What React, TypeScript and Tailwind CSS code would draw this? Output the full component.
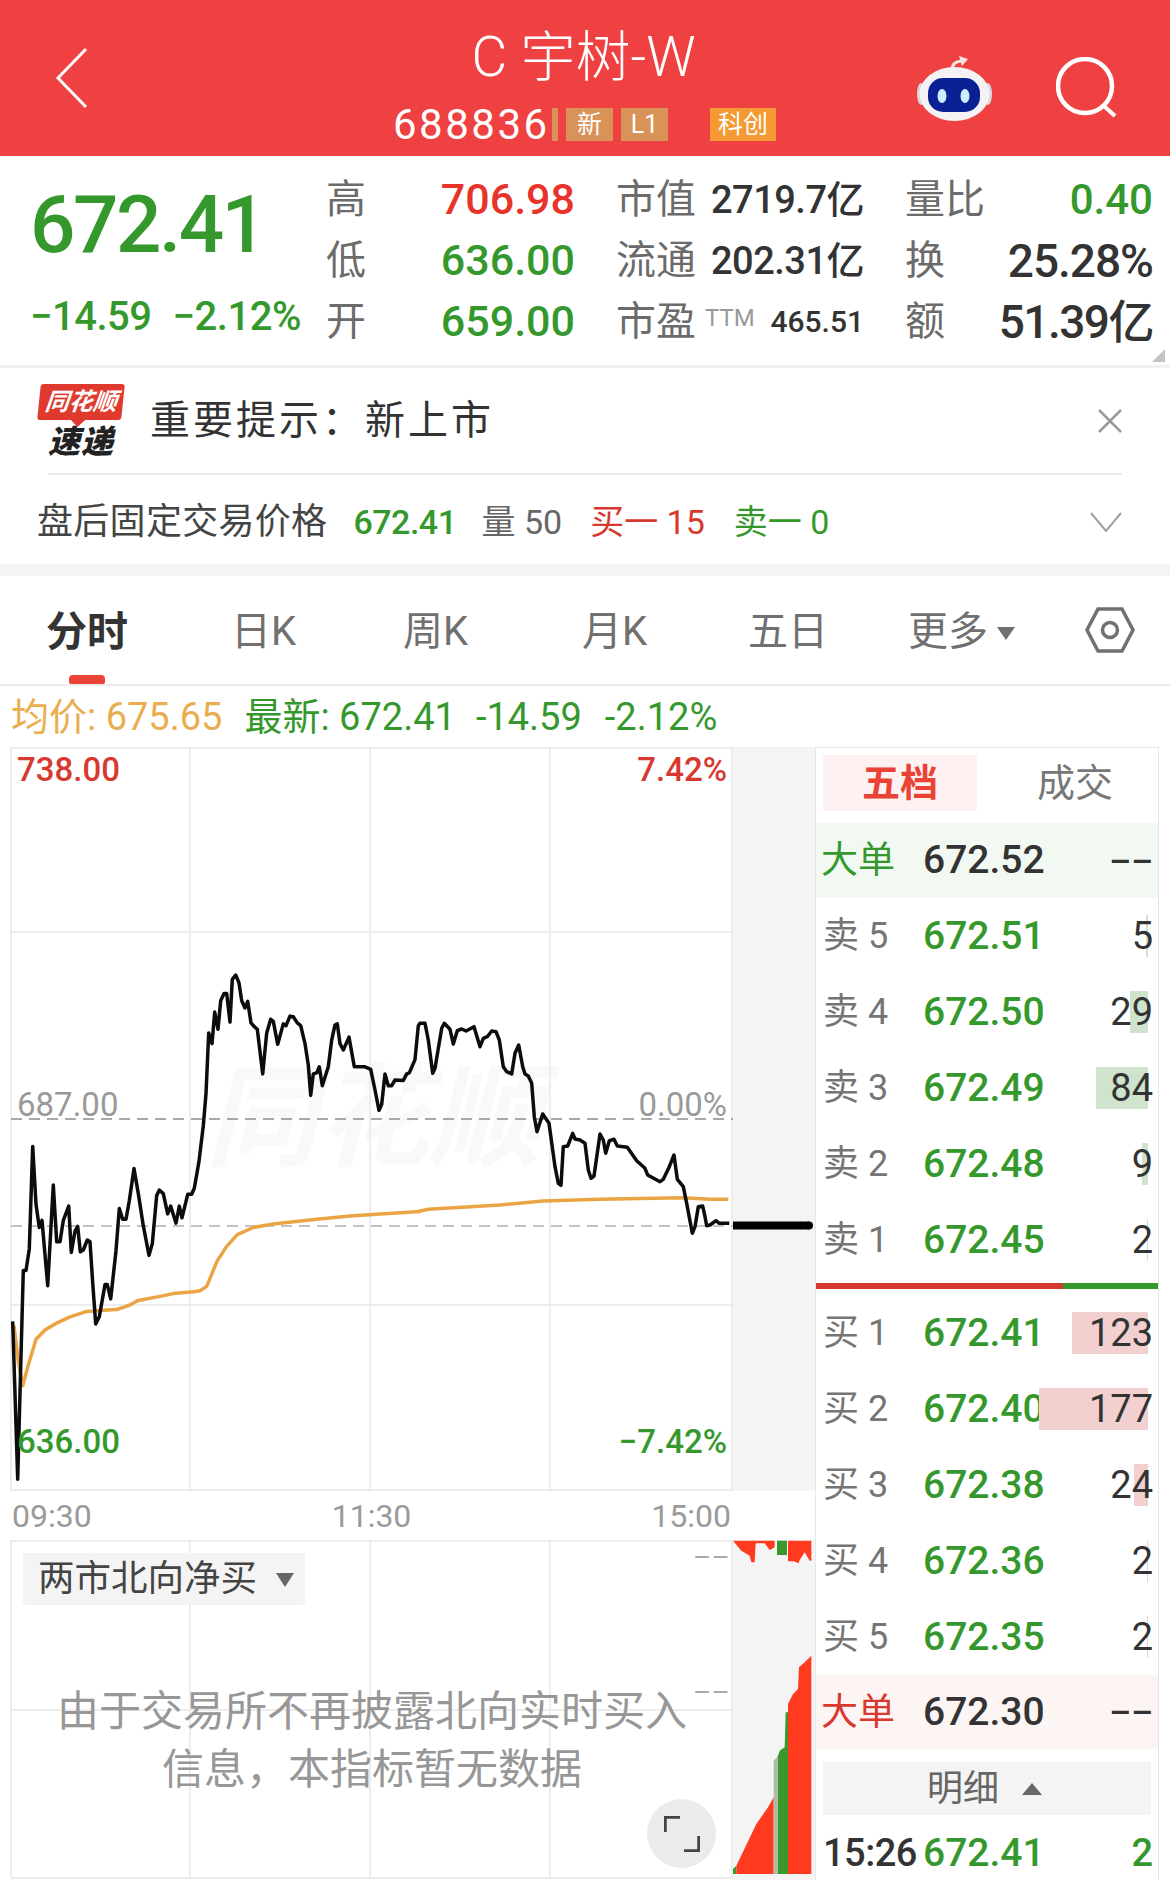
// chart points read off the reference, in crop coordinates
const blackA = [[38,1068],[53,1510],[70,925],[78,925],[88,865],[98,578],[108,740],[118,805],[126,785],[143,968],[160,686],[170,845],[180,845],[190,785],[206,745],[214,875],[225,815],[233,802],[241,873],[250,868],[262,840],[270,845],[278,960],[287,1075],[298,1055],[315,965],[322,965],[332,1005],[348,870],[358,752],[368,782],[378,782],[388,730],[402,640],[415,710],[430,800],[447,883],[457,850],[470,715],[478,700],[490,710],[503,767],[512,745],[528,793],[538,745],[546,778],[563,712],[575,712],[583,695],[597,620],[610,520],[618,430],[626,260],[636,290],[644,202],[654,250],[662,170],[672,150],[680,150],[690,230],[697,110],[707,98],[717,120],[725,170],[735,190],[743,172],[753,232],[762,242],[772,250],[788,375],[800,260],[812,222],[820,228],[833,292],[850,235],[858,240],[870,213],[880,215],[892,232],[902,240],[915,290],[925,350],[932,435],[940,375],[950,372],[958,355],[967,408],[985,355],[995,280],[1005,238],[1012,235],[1020,290],[1030,308],[1047,272],[1063,355],[1095,355],[1112,362],[1125,420],[1137,477],[1145,460],[1155,375],[1165,408],[1175,408],[1185,392],[1210,393],[1220,375],[1228,372],[1245,335],[1255,240],[1260,233]];
const blackB = [[75,250],[85,300],[98,400],[105,385],[125,265],[133,250],[150,268],[160,312],[172,272],[185,267],[198,273],[222,260],[240,320],[250,295],[262,290],[275,273],[288,275],[298,300],[310,380],[320,395],[335,402],[345,340],[356,315],[368,380],[375,402],[385,408],[395,430],[403,530],[411,575],[428,522],[447,550],[465,680],[475,730],[483,736],[490,620],[503,618],[518,580],[525,597],[540,600],[555,610],[565,690],[573,715],[582,708],[600,582],[610,600],[617,640],[628,602],[642,598],[652,618],[682,622],[710,662],[735,685],[743,705],[780,725],[790,718],[808,680],[822,645],[832,718],[850,740],[860,790],[877,880],[885,860],[895,800],[908,798],[915,830],[920,857],[930,855],[948,842],[958,850],[988,850]];
const orangeA = [[42,1080],[55,1180],[68,1248],[85,1190],[108,1118],[135,1092],[165,1075],[210,1055],[260,1040],[300,1037],[350,1035],[390,1022],[412,1010],[480,998],[520,990],[580,985],[600,982],[620,970],[652,898],[680,858],[712,825],[760,805],[820,795],[950,782],[1050,773],[1130,768],[1260,760]];
const orangeB = [[50,815],[85,808],[300,795],[430,783],[600,778],[850,773],[930,778],[985,778]];

const TOP = 747;
const fromA = (p: number[]) => `${(p[0] / 3).toFixed(1)},${(940 + p[1] / 2.8 - TOP).toFixed(1)}`;
const fromB = (p: number[]) => `${(400 + p[0] / 3).toFixed(1)},${(940 + p[1] / 3 - TOP).toFixed(1)}`;
const blackLine = [...blackA.map(fromA), ...blackB.map(fromB)].join(' ');
const orangeLine = [...orangeA.map(fromA), ...orangeB.map(fromB)].join(' ');

// side strip shapes, crop coordinates at 3x
const strip = (pts: number[][]) =>
  pts.map(p => `${(p[0] - 100) / 3},${(p[1] - 58) / 3}`).join(' ');

const sells = [
  { n: '5', price: '672.51', vol: '5', bar: 'w-[2px]' },
  { n: '4', price: '672.50', vol: '29', bar: 'w-[18px]' },
  { n: '3', price: '672.49', vol: '84', bar: 'w-[52px]' },
  { n: '2', price: '672.48', vol: '9', bar: 'w-[6px]' },
  { n: '1', price: '672.45', vol: '2', bar: 'w-[1px]' }
];
const buys = [
  { n: '1', price: '672.41', vol: '123', bar: 'w-[76px]' },
  { n: '2', price: '672.40', vol: '177', bar: 'w-[109px]' },
  { n: '3', price: '672.38', vol: '24', bar: 'w-[14px]' },
  { n: '4', price: '672.36', vol: '2', bar: 'w-[1px]' },
  { n: '5', price: '672.35', vol: '2', bar: 'w-[1px]' }
];

const Stat = ({ label, value, valueClass }: { label: string; value: string; valueClass: string }) => (
  <div className="flex h-[61px] items-center justify-between">
    <span className="text-[40px] leading-none text-[#6b6b6b]">{label}</span>
    <span className={valueClass}>{value}</span>
  </div>
);

const Level = ({ side, row, barClass }: { side: string; row: (typeof sells)[number]; barClass: string }) => (
  <div className="flex h-[76px] items-center pl-[7px]">
    <div className="flex w-[100px] items-center gap-[9px] text-[36px] leading-none text-[#757575]">
      <span>{side}</span>
      <span>{row.n}</span>
    </div>
    <span className="text-[39px] leading-none font-medium text-[#35982c]">{row.price}</span>
    <div className="relative ml-auto flex h-[42px] items-center pr-[5px] text-[38px] leading-none text-[#333]">
      <div className={`absolute top-0 right-[10px] h-[42px] ${row.bar} ${barClass}`} />
      <span className="relative">{row.vol}</span>
    </div>
  </div>
);

const tabs = [
  { label: '日K', w: 'w-[172px]' },
  { label: '周K', w: 'w-[179px]' },
  { label: '月K', w: 'w-[166px]' },
  { label: '五日', w: 'w-[160px]' }
];

export default function App() {
  return (
    <div className="h-[1880px] w-[1170px] overflow-hidden bg-white font-['Roboto','Noto_Sans_CJK_SC',sans-serif]">
      {/* header */}
      <div className="flex h-[156px] bg-[#ef4141] text-white">
        <div className="flex w-[393px] items-center pl-[55px]">
          <svg width="34" height="62" viewBox="0 0 34 62" fill="none" stroke="white" strokeWidth="3">
            <path d="M31 2 3 31l28 29" />
          </svg>
        </div>
        <div className="w-[384px]">
          <div className="mt-[30px] -ml-[3px] h-[54px] text-center text-[55px] leading-[54px] font-light whitespace-nowrap">
            C 宇树-W
          </div>
          <div className="mt-[24px] flex h-[33px] items-center">
            <span className="w-[159px] text-[42px] leading-none tracking-[2.5px]">688836</span>
            <span className="h-[33px] w-[6px] bg-[#d99257]" />
            <span className="ml-[8px] flex h-[33px] w-[47px] items-center justify-center bg-[#d99257] text-[25px] leading-none">新</span>
            <span className="ml-[8px] flex h-[33px] w-[47px] items-center justify-center bg-[#d99257] text-[25px] leading-none">L1</span>
            <span className="ml-[42px] flex h-[33px] w-[66px] items-center justify-center bg-[#f59a32] text-[25px] leading-none">科创</span>
          </div>
        </div>
        <div className="flex flex-1 items-start pt-[54px] pl-[139px]">
          <svg width="78" height="70" viewBox="916 54 78 70">
            <path d="M952 70c0-6 4-9 10-9" fill="none" stroke="#f4e4e0" strokeWidth="3" />
            <path d="M959 56l9 3-6 7z" fill="#f4e4e0" />
            <ellipse cx="921" cy="94" rx="4" ry="11" fill="#d8d8de" />
            <ellipse cx="988" cy="94" rx="4" ry="11" fill="#d8d8de" />
            <ellipse cx="954.5" cy="94" rx="35" ry="27" fill="#f4f2f4" />
            <rect x="928" y="78" width="52" height="34" rx="15" fill="#0a2196" />
            <ellipse cx="942" cy="96" rx="4.5" ry="7" fill="#cdeefc" />
            <ellipse cx="965" cy="96" rx="4.5" ry="7" fill="#cdeefc" />
          </svg>
          <svg className="mt-[3px] ml-[62px]" width="62" height="66" viewBox="1055 58 62 66" fill="none" stroke="white">
            <circle cx="1084" cy="87" r="27" strokeWidth="4.5" />
            <path d="M1103 107l11 10" strokeWidth="4" />
          </svg>
        </div>
      </div>

      {/* quote stats */}
      <div className="relative flex h-[212px] border-b-[3px] border-[#f1f1f1] pt-[13px]">
        <div className="w-[326px] pl-[30px] font-medium text-[#35982c]">
          <div className="mt-[16px] text-[80px] leading-[80px] tracking-[-2.5px]">672.41</div>
          <div className="mt-[32px] flex gap-[21px] text-[40px] leading-none tracking-[-0.5px]">
            <span>−14.59</span>
            <span>−2.12%</span>
          </div>
        </div>
        <div className="w-[249px]">
          <Stat label="高" value="706.98" valueClass="text-[43px] leading-none font-medium text-[#e8332a]" />
          <Stat label="低" value="636.00" valueClass="text-[43px] leading-none font-medium text-[#35982c]" />
          <Stat label="开" value="659.00" valueClass="text-[43px] leading-none font-medium text-[#35982c]" />
        </div>
        <div className="ml-[41px] w-[248px]">
          <Stat label="市值" value="2719.7亿" valueClass="text-[38px] leading-none font-medium tracking-[-0.5px] text-[#333]" />
          <Stat label="流通" value="202.31亿" valueClass="text-[38px] leading-none font-medium tracking-[-0.5px] text-[#333]" />
          <div className="flex h-[61px] items-center">
            <span className="text-[40px] leading-none text-[#6b6b6b]">市盈</span>
            <span className="mb-[8px] ml-[9px] text-[24px] leading-none text-[#999]">TTM</span>
            <span className="ml-auto text-[30px] leading-none font-medium text-[#333]">465.51</span>
          </div>
        </div>
        <div className="ml-[41px] w-[248px]">
          <Stat label="量比" value="0.40" valueClass="text-[42px] leading-none font-medium text-[#35982c]" />
          <Stat label="换" value="25.28%" valueClass="text-[46px] leading-none font-medium tracking-[-1px] text-[#333]" />
          <Stat label="额" value="51.39亿" valueClass="text-[46px] leading-none font-medium tracking-[-1.5px] text-[#333]" />
        </div>
        <div className="absolute right-[5px] bottom-[3px] h-0 w-0 border-b-[13px] border-l-[13px] border-b-[#c4c4c4] border-l-transparent" />
      </div>

      {/* notice */}
      <div className="h-[196px]">
        <div className="mx-[48px] flex h-[107px] items-center border-b-2 border-[#ececec]">
          <div className="-ml-[9px] w-[86px]">
            <div className="relative flex h-[36px] w-[84px] -skew-x-6 items-center justify-center rounded-[3px] bg-[#e03a2f] text-[24px] leading-none font-bold text-white italic">
              同花顺
              <div className="absolute -bottom-[5px] left-[36px] h-[10px] w-[10px] rotate-45 bg-[#e03a2f]" />
            </div>
            <div className="mt-[7px] pl-[9px] text-[32px] leading-[30px] font-black tracking-[1px] text-[#222] italic">速递</div>
          </div>
          <span className="ml-[25px] text-[40px] leading-none tracking-[3px] text-[#333]">重要提示：新上市</span>
          <svg className="mr-0 ml-auto" width="24" height="24" viewBox="0 0 24 24" stroke="#9a9a9a" strokeWidth="2.5">
            <path d="M1 1l22 22M23 1 1 23" />
          </svg>
        </div>
        <div className="flex h-[87px] items-center pt-[6px] pr-[48px] pl-[37px] text-[34px] leading-none">
          <span className="text-[36px] tracking-[0.3px] text-[#444]">盘后固定交易价格</span>
          <span className="ml-[26px] font-medium tracking-[-0.5px] text-[#35982c]">672.41</span>
          <span className="ml-[25px] text-[#666]">量 50</span>
          <span className="ml-[28px] text-[#d8392f]">买一 15</span>
          <span className="ml-[29px] text-[#35982c]">卖一 0</span>
          <svg className="ml-auto" width="32" height="20" viewBox="0 0 32 20" fill="none" stroke="#a0a0a0" strokeWidth="2">
            <path d="M1 1l15 18L31 1" />
          </svg>
        </div>
      </div>
      <div className="h-[12px] bg-[#f4f4f4]" />

      {/* tabs */}
      <div className="relative flex h-[110px] items-center border-b-2 border-[#ececec] pt-[4px] text-[40px] leading-none text-[#707070]">
        <span className="ml-[46px] w-[185px] text-[41px] font-bold text-[#333]">分时</span>
        {tabs.map(tab => (
          <span key={tab.label} className={tab.w}>{tab.label}</span>
        ))}
        <span>更多</span>
        <span className="mt-[2px] ml-[9px] h-0 w-0 border-t-[13px] border-r-[9px] border-l-[9px] border-t-[#707070] border-r-transparent border-l-transparent" />
        <svg className="-mt-[4px] ml-[70px]" width="50" height="46" viewBox="0 0 50 46" fill="none" stroke="#707070" strokeWidth="3.5">
          <path d="M13 2h24l11 21-11 21H13L2 23z" />
          <circle cx="25" cy="23" r="7.5" />
        </svg>
        <div className="absolute bottom-0 left-[69px] h-[9px] w-[36px] rounded-t-[4px] rounded-b-[2px] bg-[#ea4335]" />
      </div>

      {/* last price line */}
      <div className="flex h-[61px] items-center pt-[1px] pl-[11px] text-[38px] leading-none whitespace-nowrap">
        <span className="text-[#e9ae4f]">均价: 675.65</span>
        <span className="ml-[22px] text-[#35982c]">最新: 672.41</span>
        <span className="ml-[20px] text-[#35982c]">-14.59</span>
        <span className="ml-[23px] text-[#35982c]">-2.12%</span>
      </div>

      <div className="flex">
        {/* left column */}
        <div className="w-[815px]">
          <div className="relative h-[744px]">
            <div className="absolute top-[316px] left-[205px] text-[112px] leading-none font-bold text-[#f9f9f9] italic">同花顺</div>
            <svg className="absolute inset-0" width="815" height="744" viewBox="0 0 815 744" fill="none">
              <rect x="733" y="0" width="82" height="744" fill="#f4f4f4" />
              <g stroke="#e6e8ec" strokeWidth="1.5">
                <path d="M11 1h722M11 185h722M11 558h722M11 743h722" />
                <path d="M11 0v744M190 0v744M370 0v744M550 0v744M732 0v744" />
              </g>
              <path d="M11 372h722" stroke="#8c8c8c" strokeWidth="1.5" strokeDasharray="11 7" />
              <path d="M11 479h722" stroke="#b0b0b0" strokeWidth="1.5" strokeDasharray="11 7" />
              <polyline points={orangeLine} stroke="#eba444" strokeWidth="3.5" strokeLinejoin="round" />
              <polyline points={blackLine} stroke="#0c0c0c" strokeWidth="3.5" strokeLinejoin="round" />
              <path d="M733 478.5h76" stroke="#000" strokeWidth="8" />
              <circle cx="809" cy="478.5" r="4" fill="#000" />
            </svg>
            <span className="absolute top-[4px] left-[17px] text-[33px] leading-[38px] font-medium text-[#d8392f]">738.00</span>
            <span className="absolute top-[4px] right-[88px] text-[33px] leading-[38px] font-medium text-[#d8392f]">7.42%</span>
            <span className="absolute top-[339px] left-[17px] text-[33px] leading-[38px] text-[#999]">687.00</span>
            <span className="absolute top-[339px] right-[88px] text-[33px] leading-[38px] text-[#999]">0.00%</span>
            <span className="absolute top-[676px] left-[17px] text-[33px] leading-[38px] font-medium text-[#35982c]">636.00</span>
            <span className="absolute top-[676px] right-[88px] text-[33px] leading-[38px] font-medium text-[#35982c]">−7.42%</span>
          </div>
          <div className="flex h-[49px] w-[733px] items-center justify-between pr-[2px] pl-[12px] text-[32px] leading-none text-[#9a9a9a]">
            <span>09:30</span>
            <span>11:30</span>
            <span>15:00</span>
          </div>

          {/* lower indicator */}
          <div className="relative h-[340px]">
            <svg className="absolute inset-0" width="815" height="340" viewBox="0 0 815 340" fill="none">
              <rect x="733" y="0" width="82" height="340" fill="#f4f4f4" />
              <g stroke="#e8e8ec" strokeWidth="1.5">
                <path d="M11 1h722M11 170h722M11 338h722" />
                <path d="M11 0v338M190 0v338M370 0v338M550 0v338M732 0v338" />
              </g>
              <g transform="translate(733 0)">
                <polygon fill="#ff3a1e" points={strip([[100,60],[125,90],[150,105],[155,125],[165,125],[168,68],[195,68],[210,88],[225,80],[225,60]])} />
                <polygon fill="#3a982c" points={strip([[232,60],[232,103],[262,103],[262,60]])} />
                <polygon fill="#ff3a1e" points={strip([[265,60],[265,122],[283,122],[297,128],[300,118],[315,95],[330,120],[335,120],[335,60]])} />
                <polygon fill="#3a982c" points={strip([[100,1060],[100,1045],[110,1035],[110,1060]])} />
                <polygon fill="#ff3a1e" points={strip([[110,1060],[110,1035],[170,910],[205,860],[222,830],[222,1060]])} />
                <polygon fill="#aebca4" points={strip([[222,1060],[222,720],[235,705],[235,1060]])} />
                <polygon fill="#3a982c" points={strip([[235,1060],[235,705],[240,690],[255,680],[258,575],[265,575],[265,1060]])} />
                <polygon fill="#ff3a1e" points={strip([[265,1060],[265,550],[280,520],[295,505],[298,440],[315,425],[335,405],[335,1060]])} />
              </g>
            </svg>
            <div className="absolute top-[13px] left-[23px] flex h-[52px] w-[282px] items-center rounded-[3px] bg-[#f4f4f4] pl-[15px] text-[36.5px] leading-none text-[#444]">
              两市北向净买
              <span className="mt-[2px] ml-[19px] h-0 w-0 border-t-[14px] border-r-[9px] border-l-[9px] border-t-[#666] border-r-transparent border-l-transparent" />
            </div>
            <span className="absolute top-[1px] left-[693px] text-[28px] leading-[34px] text-[#aaa]">––</span>
            <span className="absolute top-[136px] left-[693px] text-[28px] leading-[34px] text-[#aaa]">––</span>
            <div className="absolute top-[143px] left-[0px] w-[744px] text-center text-[42px] leading-[58px] text-[#979797]">
              由于交易所不再披露北向实时买入
              <br />
              信息，本指标暂无数据
            </div>
            <div className="absolute top-[259px] left-[647px] flex h-[69px] w-[69px] items-center justify-center rounded-full bg-[#ebebeb]">
              <svg width="36" height="36" viewBox="0 0 36 36" fill="none" stroke="#444" strokeWidth="3.5">
                <path d="M1 16V1h15M35 20v15H20" />
              </svg>
            </div>
          </div>
        </div>

        {/* order book */}
        <div className="h-[1133px] w-[344px] border-x border-t border-[#e6e6e6]">
          <div className="flex h-[75px] items-start pt-[7px] pl-[7px]">
            <div className="flex h-[56px] w-[154px] items-center justify-center bg-[#fdf1f1] text-[38px] leading-none font-bold text-[#ea4335]">五档</div>
            <div className="ml-[60px] flex h-[56px] items-center text-[38px] leading-none text-[#777]">成交</div>
          </div>
          <div className="flex h-[75px] items-center bg-[#f2f8f2] pr-[5px] pl-[5px]">
            <span className="w-[102px] text-[37px] leading-none text-[#35982c]">大单</span>
            <span className="text-[39px] leading-none font-medium text-[#333]">672.52</span>
            <span className="ml-auto text-[34px] leading-none font-medium text-[#333]">––</span>
          </div>
          <div>
            {sells.map(row => (
              <Level key={row.n} side="卖" row={row} barClass="bg-[#cfe3cd]" />
            ))}
          </div>
          <div className="mt-[5px] flex h-[6px]">
            <div className="w-[247px] bg-[#d8392f]" />
            <div className="flex-1 bg-[#35982c]" />
          </div>
          <div className="mt-[6px]">
            {buys.map(row => (
              <Level key={row.n} side="买" row={row} barClass="bg-[#f2d0d0]" />
            ))}
          </div>
          <div className="flex h-[74px] items-center bg-[#fdf4f4] pr-[5px] pl-[5px]">
            <span className="w-[102px] text-[37px] leading-none text-[#d8392f]">大单</span>
            <span className="text-[39px] leading-none font-medium text-[#333]">672.30</span>
            <span className="ml-auto text-[34px] leading-none font-medium text-[#333]">––</span>
          </div>
          <div className="mx-[7px] mt-[13px] flex h-[53px] items-center bg-[#f4f4f4] pl-[104px] text-[36px] leading-none text-[#666]">
            明细
            <span className="ml-[23px] h-0 w-0 border-r-[10px] border-b-[12px] border-l-[10px] border-r-transparent border-b-[#666] border-l-transparent" />
          </div>
          <div className="mt-[13px] flex h-[50px] items-center pr-[5px] pl-[7px] text-[38px] leading-none font-medium">
            <span className="w-[100px] tracking-[-0.5px] text-[#333]">15:26</span>
            <span className="text-[39px] text-[#35982c]">672.41</span>
            <span className="ml-auto text-[#35982c]">2</span>
          </div>
        </div>
      </div>
    </div>
  );
}
